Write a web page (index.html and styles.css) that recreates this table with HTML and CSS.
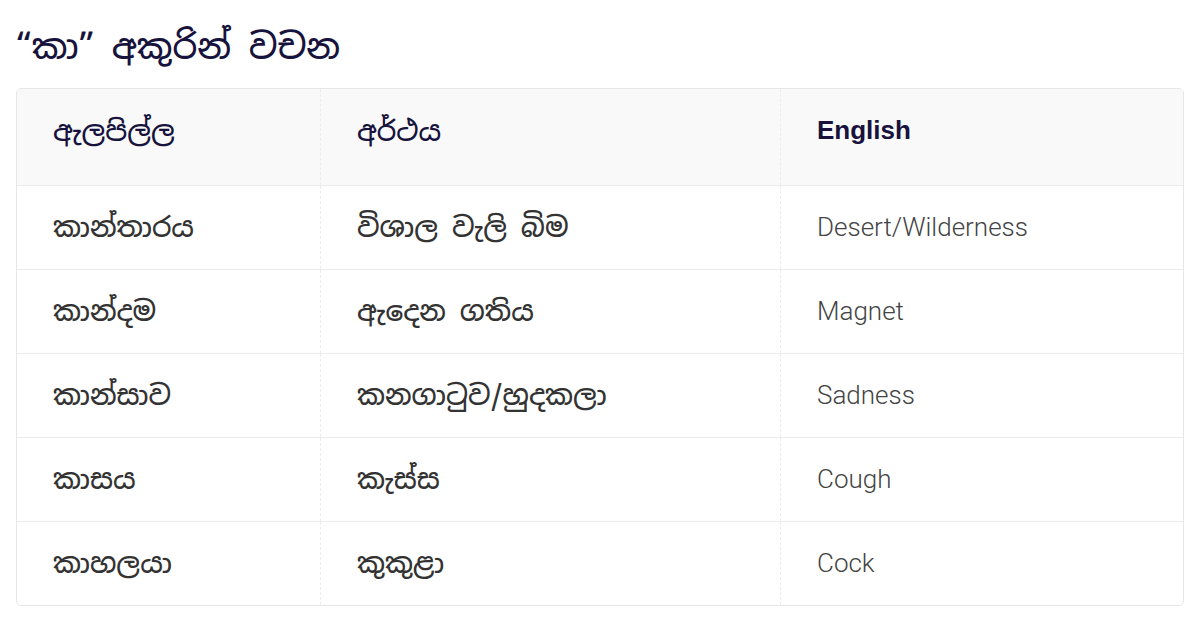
FILE: index.html
```html
<!DOCTYPE html>
<html lang="si">
<head>
<meta charset="utf-8">
<link rel="stylesheet" href="styles.css">
</head>
<body>
<main class="page">
  <h1 class="title">“කා” අකුරින් වචන</h1>
  <div class="table-wrap">
    <table class="words">
      <thead>
        <tr>
          <th class="c1">ඇලපිල්ල</th>
          <th class="c2">අර්ථය</th>
          <th class="c3 en">English</th>
        </tr>
      </thead>
      <tbody>
        <tr><td>කාන්තාරය</td><td>විශාල වැලි බිම</td><td class="en">Desert/Wilderness</td></tr>
        <tr><td>කාන්දම</td><td>ඇදෙන ගතිය</td><td class="en">Magnet</td></tr>
        <tr><td>කාන්සාව</td><td>කනගාටුව/හුදකලා</td><td class="en">Sadness</td></tr>
        <tr><td>කාසය</td><td>කැස්ස</td><td class="en">Cough</td></tr>
        <tr><td>කාහලයා</td><td>කුකුළා</td><td class="en">Cock</td></tr>
      </tbody>
    </table>
  </div>
</main>
</body>
</html>
```

FILE: styles.css
```css
html, body {
  margin: 0;
  padding: 0;
  background: #ffffff;
}
body {
  font-family: "Noto Sans Sinhala", "Iskoola Pota", "Noto Sans", "DejaVu Sans", sans-serif;
}
.page {
  padding: 20px 16px 0 16px;
}
.title {
  margin: 0;
  height: 68px;
  font-size: 35px;
  font-weight: 500;
  line-height: 54px;
  color: #17133d;
}
.table-wrap {
  border: 1px solid #e6e6e6;
  border-radius: 5px;
  overflow: hidden;
  width: 1166px;
}
.words {
  width: 100%;
  border-collapse: collapse;
  table-layout: fixed;
}
.words th, .words td {
  text-align: left;
  padding: 0 0 0 36px;
  border-left: 1px dashed #ececec;
  vertical-align: middle;
}
.words th:first-child, .words td:first-child {
  border-left: none;
}
.c1 { width: 267px; }
.c2 { width: 423px; }
.words thead tr {
  background: #f9f9f9;
  height: 96px;
}
.words th {
  font-size: 27.5px;
  font-weight: 500;
  color: #17133d;
  padding-bottom: 12px;
}
.words th.en {
  font-family: "Liberation Sans", Arial, sans-serif;
  font-weight: 700;
  font-size: 26px;
}
.words tbody tr {
  height: 84px;
  border-top: 1px solid #ececec;
}
.words td {
  font-size: 27.5px;
  font-weight: 500;
  color: #333333;
}
.words td.en {
  font-family: Roboto, "Noto Sans", sans-serif;
  font-weight: 300;
  font-size: 26px;
  color: #444444;
}
```
